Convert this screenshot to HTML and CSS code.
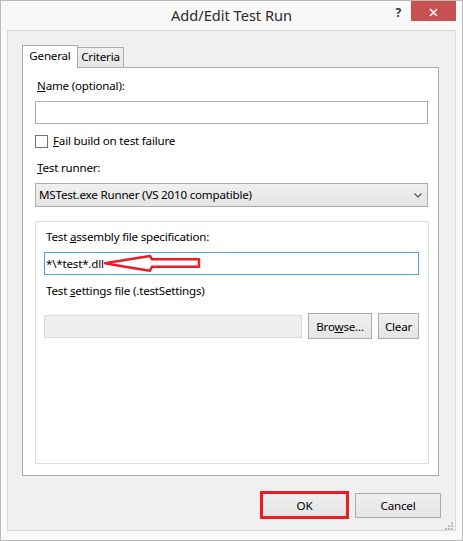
FILE: index.html
```html
<!DOCTYPE html>
<html lang="en">

<head>
    <meta charset="UTF-8">
    <title>Add/Edit Test Run</title>
    <link rel="stylesheet" href="styles.css">
</head>

<body>
    <div class="window">
        <div class="titlebar">
            <span></span>
            <span class="title">Add/Edit Test Run</span>
            <div class="captionButtons">
                <span class="help">?</span>
                <span class="close">
                    <svg width="9" height="9" viewBox="0 0 9 9">
                        <path d="M1 1 L8 8 M8 1 L1 8" stroke="#fff" stroke-width="1.6" fill="none" />
                    </svg>
                </span>
            </div>
        </div>

        <div class="client">
            <div class="tabs">
                <div class="tab active">General</div>
                <div class="tab">Criteria</div>
            </div>

            <div class="panel">
                <label class="fieldLabel first"><u>N</u>ame (optional):</label>
                <div class="textbox wide"></div>

                <label class="checkRow">
                    <span class="checkBox"></span>
                    <span><u>F</u>ail build on test failure</span>
                </label>

                <label class="fieldLabel runner"><u>T</u>est runner:</label>
                <div class="select">
                    <span>MSTest.exe Runner (VS 2010 compatible)</span>
                    <svg width="8" height="5" viewBox="0 0 8 5">
                        <path d="M0.5 0.5 L4 4 L7.5 0.5" stroke="#606060" stroke-width="1.4" fill="none" />
                    </svg>
                </div>

                <div class="group">
                    <label class="fieldLabel">Test <u>a</u>ssembly file specification:</label>
                    <div class="textbox focused">*\*test*.dll
                        <svg class="arrow" width="105" height="25" viewBox="0 0 105 25">
                            <path d="M5 13.3 L25 10 L50 6 L52 9.3 L99 9.3 L99 16.7 L52 16.7 L50 20.7 L25 16.7 Z"
                                stroke="#ed1c24" stroke-width="2.5" fill="none" stroke-linejoin="round" />
                        </svg>
                    </div>

                    <label class="fieldLabel settings">Test <u>s</u>ettings file (.testSettings)</label>
                    <div class="fileRow">
                        <div class="textbox disabled"></div>
                        <button class="btn browse">Bro<u>w</u>se...</button>
                        <button class="btn clear">Clear</button>
                    </div>
                </div>
            </div>

            <div class="dialogButtons">
                <button class="btn ok">OK</button>
                <button class="btn cancel">Cancel</button>
            </div>

            <svg class="grip" width="8" height="8" viewBox="0 0 8 8">
                <rect x="6" y="0" width="2" height="2" fill="#b8b8b8" />
                <rect x="3" y="3" width="2" height="2" fill="#b8b8b8" />
                <rect x="6" y="3" width="2" height="2" fill="#b8b8b8" />
                <rect x="0" y="6" width="2" height="2" fill="#b8b8b8" />
                <rect x="3" y="6" width="2" height="2" fill="#b8b8b8" />
                <rect x="6" y="6" width="2" height="2" fill="#b8b8b8" />
            </svg>
        </div>
    </div>
</body>

</html>
```

FILE: styles.css
```css
* {
    box-sizing: border-box;
}

body {
    margin: 0;
    font-family: "Segoe UI", "Noto Sans", sans-serif;
    font-size: 11.6px;
    letter-spacing: -0.2px;
    line-height: 16px;
    color: #000;
}

.window {
    display: flex;
    flex-direction: column;
    width: 463px;
    height: 541px;
    padding: 0 6px 9px 6px;
    border: solid 1px #b9b9b9;
    background-color: #f9f9f9;
}

.titlebar {
    display: grid;
    grid-template-columns: 1fr auto 1fr;
    height: 29px;
    flex-shrink: 0;
}

.title {
    padding-top: 4px;
    font-size: 14.6px;
    letter-spacing: 0;
    line-height: 20px;
    color: #2b2b2b;
}

.captionButtons {
    display: flex;
    justify-content: flex-end;
    align-items: flex-start;
}

.help {
    margin-top: 4px;
    margin-right: 10px;
    font-weight: 700;
    font-size: 12px;
    color: #333;
}

.close {
    display: flex;
    justify-content: center;
    align-items: center;
    width: 45px;
    height: 20px;
    padding-top: 3px;
    background-color: #c75050;
}

.client {
    display: flex;
    flex-direction: column;
    position: relative;
    height: 501px;
    padding: 14px 14px 0 14px;
    border: solid 1px #d9d9d9;
    background-color: #f0f0f0;
}

.tabs {
    display: flex;
    align-items: flex-end;
    margin-bottom: -1px;
}

.tab {
    width: 47px;
    height: 20px;
    margin-left: -1px;
    margin-bottom: 1px;
    padding-top: 1px;
    text-align: center;
    border: solid 1px #acacac;
    border-bottom: none;
    background-image: linear-gradient(#f0f0f0, #e5e5e5);
}

.tab.active {
    position: relative;
    z-index: 1;
    width: 56px;
    height: 23px;
    margin-left: 0;
    margin-bottom: 0;
    padding-top: 2px;
    background: #fff;
}

.panel {
    display: flex;
    flex-direction: column;
    width: 417px;
    height: 409px;
    padding: 10px 9px 0 12px;
    border: solid 1px #acacac;
    background-color: #fff;
}

.fieldLabel {
    padding-left: 2px;
    margin-bottom: 7px;
}

.fieldLabel.runner {
    margin-top: 11px;
}

.fieldLabel.settings {
    margin-top: 8px;
}

.textbox {
    height: 23px;
    padding-left: 1px;
    line-height: 21px;
    border: solid 1px #acacac;
    background-color: #fff;
}

.textbox.wide {
    width: 393px;
}

.textbox.focused {
    position: relative;
    width: 375px;
    border-color: #569de5;
}

.textbox.disabled {
    width: 258px;
    border-color: #d9d9d9;
    background-color: #efefef;
}

.arrow {
    position: absolute;
    left: 55px;
    top: -3px;
}

.checkRow {
    display: flex;
    align-items: center;
    gap: 5px;
    margin-top: 9px;
}

.checkBox {
    width: 13px;
    height: 13px;
    border: solid 1px #707070;
    background-color: #fff;
}

.select {
    display: flex;
    justify-content: space-between;
    align-items: center;
    width: 393px;
    height: 24px;
    padding: 0 5px 0 3px;
    border: solid 1px #acacac;
    background-image: linear-gradient(#f0f0f0, #e5e5e5);
}

.group {
    display: flex;
    flex-direction: column;
    width: 394px;
    height: 243px;
    margin-top: 14px;
    padding: 7px 0 0 8px;
    border: solid 1px #dcdcdc;
}

.fileRow {
    display: flex;
    align-items: center;
    gap: 6px;
    margin-top: 7px;
}

.btn {
    height: 25px;
    padding: 0;
    font-family: inherit;
    font-size: 11.6px;
    letter-spacing: -0.2px;
    color: #000;
    border: solid 1px #acacac;
    background-image: linear-gradient(#f0f0f0, #e5e5e5);
}

.browse {
    width: 64px;
    height: 26px;
}

.clear {
    width: 41px;
    height: 26px;
}

.dialogButtons {
    display: flex;
    justify-content: flex-end;
    align-items: center;
    gap: 6px;
    height: 28px;
    margin-top: 15px;
}

.ok {
    width: 89px;
    height: 28px;
    border: solid 3px #ed1c24;
}

.cancel {
    width: 86px;
}

.grip {
    position: absolute;
    right: 2px;
    bottom: 0;
}
```
